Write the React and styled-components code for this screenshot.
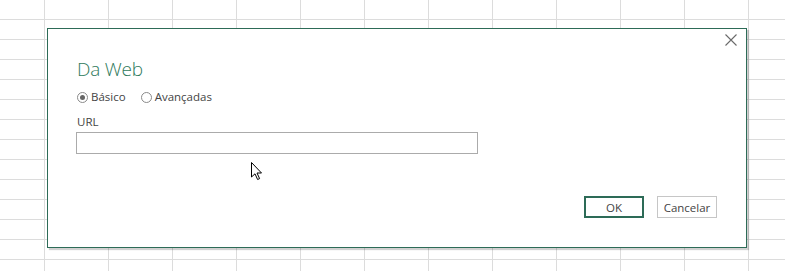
import React from "react";
import styled, { createGlobalStyle } from "styled-components";

const Global = createGlobalStyle`
  html, body { margin: 0; padding: 0; background: #fff; }
  body { font-family: "Open Sans", "Noto Sans", sans-serif; }
`;

const Sheet = styled.div`
  width: 785px;
  height: 271px;
  box-sizing: border-box;
  padding: 28px 0 0 47px;
  background-color: #fff;
  background-image:
    linear-gradient(to right, #dcdcdc 1px, transparent 1px),
    linear-gradient(to bottom, #dcdcdc 1px, transparent 1px);
  background-size: 64px 20px;
  background-position: 44px 19px;
  overflow: hidden;
`;

const Dialog = styled.div`
  position: relative;
  width: 700px;
  height: 220px;
  box-sizing: border-box;
  background: #fff;
  border: 1px solid #2d6b57;
  box-shadow: 2px 2px 1px rgba(0, 0, 0, 0.18);
  display: flex;
  flex-direction: column;
`;

const TopBar = styled.div`
  display: flex;
  justify-content: flex-end;
  padding: 5px 9px 0 0;
  height: 12px;
`;

const CloseButton = styled.button`
  width: 12px;
  height: 12px;
  padding: 0;
  border: 0;
  background: none;
  display: block;
  cursor: default;
  svg { display: block; }
`;

const Body = styled.div`
  flex: 1;
  display: flex;
  flex-direction: column;
  padding: 0 29px 29px 28px;
`;

const Title = styled.h1`
  margin: 12px 0 0 1px;
  font-family: "Open Sans", sans-serif;
  font-weight: 300;
  font-size: 19px;
  line-height: 22px;
  color: #2f7a5c;
  letter-spacing: -0.2px;
`;

const RadioRow = styled.div`
  display: flex;
  align-items: center;
  gap: 15px;
  margin: 9px 0 0 1px;
`;

const RadioOption = styled.label`
  display: flex;
  align-items: center;
  gap: 3px;
  font-size: 11.5px;
  line-height: 16px;
  color: #444;
`;

const RadioCircle = styled.span`
  width: 9px;
  height: 9px;
  border-radius: 50%;
  border: 1px solid #8a8a8a;
  background: #fff;
  display: flex;
  align-items: center;
  justify-content: center;
  &::after {
    content: "";
    width: 5px;
    height: 5px;
    border-radius: 50%;
    background: ${(p) => (p.$checked ? "#666" : "transparent")};
  }
`;

const FieldLabel = styled.div`
  margin: 9px 0 0 1px;
  font-size: 11.5px;
  line-height: 16px;
  color: #444;
`;

const UrlInput = styled.input`
  margin-top: 2px;
  width: 402px;
  height: 22px;
  box-sizing: border-box;
  border: 1px solid #ababab;
  background: #fff;
  outline: none;
  padding: 0 4px;
  font: inherit;
`;

const Footer = styled.div`
  margin-top: auto;
  display: flex;
  justify-content: flex-end;
  gap: 13px;
`;

const Button = styled.button`
  width: 60px;
  height: 22px;
  box-sizing: border-box;
  background: #fff;
  border: ${(p) => (p.$primary ? "2px solid #2d6b57" : "1px solid #c6c6c6")};
  font-family: "Open Sans", sans-serif;
  font-size: 11.5px;
  color: #444;
  padding: 0;
  cursor: default;
`;

const Cursor = styled.svg`
  position: absolute;
  left: 202px;
  top: 132px;
`;

export default function App() {
  return (
    <>
      <Global />
      <Sheet>
        <Dialog>
          <TopBar>
            <CloseButton aria-label="Fechar">
              <svg width="12" height="12" viewBox="0 0 12 12">
                <path d="M0.5 0.5 L11.5 11.5 M11.5 0.5 L0.5 11.5" stroke="#6a6a6a" strokeWidth="1.1" />
              </svg>
            </CloseButton>
          </TopBar>
          <Body>
            <Title>Da Web</Title>
            <RadioRow>
              <RadioOption>
                <RadioCircle $checked />
                Básico
              </RadioOption>
              <RadioOption>
                <RadioCircle />
                Avançadas
              </RadioOption>
            </RadioRow>
            <FieldLabel>URL</FieldLabel>
            <UrlInput type="text" />
            <Footer>
              <Button $primary>OK</Button>
              <Button>Cancelar</Button>
            </Footer>
          </Body>
          <Cursor width="14" height="20" viewBox="0 0 14 20">
            <path
              d="M1.5 1.5 L1.5 16 L5 12.8 L7.6 18.5 L9.6 17.6 L7 12 L11.5 12 Z"
              fill="#fff"
              stroke="#000"
              strokeWidth="1"
              strokeLinejoin="miter"
            />
          </Cursor>
        </Dialog>
      </Sheet>
    </>
  );
}
